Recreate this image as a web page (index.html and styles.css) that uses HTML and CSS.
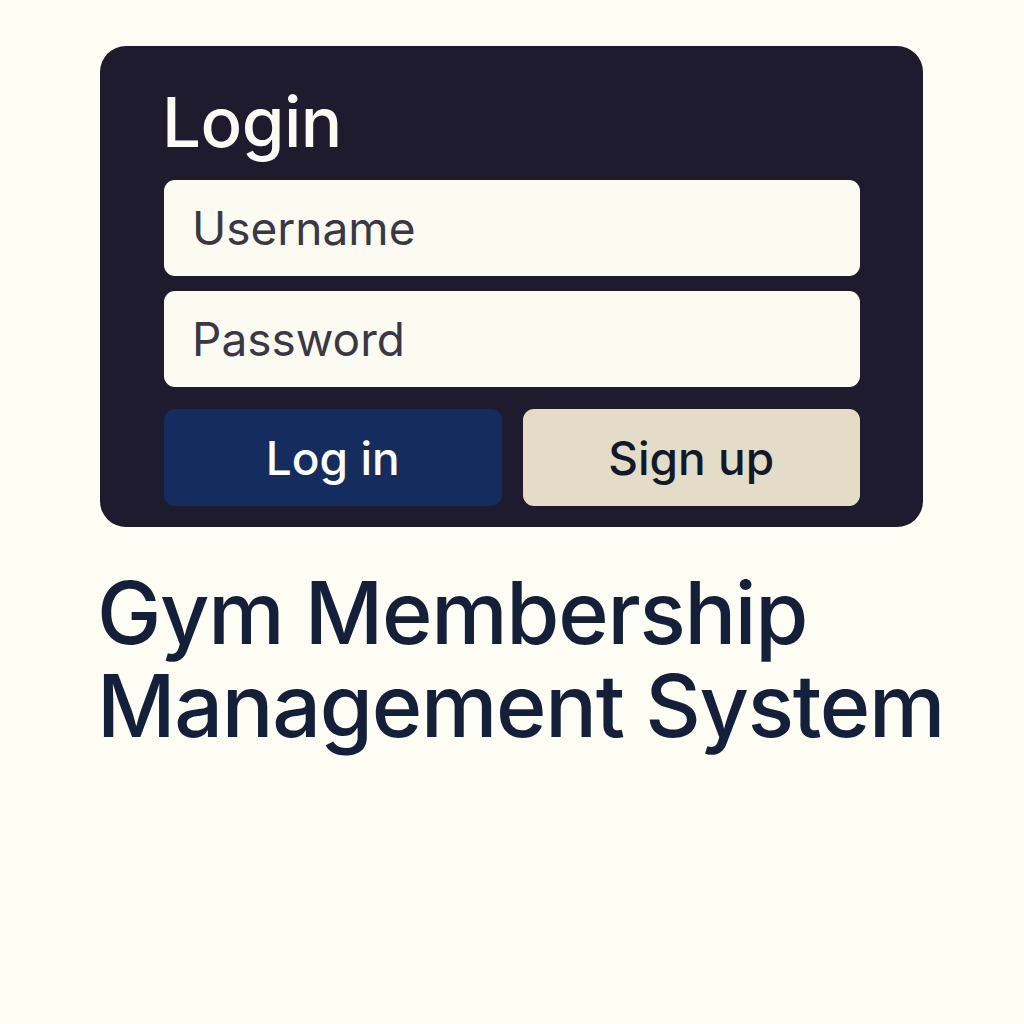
FILE: index.html
```html
<!DOCTYPE html>
<html>
<head>
<meta charset="utf-8">
<link rel="stylesheet" href="styles.css">
</head>
<body>
<main class="page">
  <section class="card">
    <h1 class="card-title">Login</h1>
    <div class="field">Username</div>
    <div class="field">Password</div>
    <div class="actions">
      <button class="btn btn-primary">Log in</button>
      <button class="btn btn-secondary">Sign up</button>
    </div>
  </section>
  <h2 class="headline">Gym Membership<br>Management System</h2>
</main>
</body>
</html>
```
FILE: styles.css
```css
* { box-sizing: border-box; }
html, body { margin: 0; padding: 0; }
body {
  background: #fdfdf4;
  font-family: Inter, "Noto Sans", sans-serif;
  width: 1024px;
  height: 1024px;
  overflow: hidden;
}
.page {
  padding: 46px 0 0 100px;
}
.card {
  width: 823px;
  height: 481px;
  background: #1f1b2e;
  border-radius: 26px;
  padding: 36px 63px 0 64px;
  display: flex;
  flex-direction: column;
}
.card-title {
  margin: 0 0 18px -2px;
  color: #fbfbf2;
  font-size: 69px;
  font-weight: 500;
  line-height: 80px;
  letter-spacing: -0.5px;
}
.field {
  height: 96px;
  background: #fbfbf2;
  border-radius: 11px;
  color: #3a3746;
  font-size: 46px;
  font-weight: 400;
  display: flex;
  align-items: center;
  padding-left: 28px;
  margin-bottom: 15px;
}
.actions {
  display: flex;
  gap: 21px;
  margin-top: 7px;
}
.btn {
  flex: 1;
  height: 97px;
  border: none;
  border-radius: 11px;
  font-family: inherit;
  font-size: 46px;
  font-weight: 500;
  padding: 0;
}
.btn-primary {
  background: #142c5e;
  color: #ffffff;
}
.btn-secondary {
  background: #e4dcc7;
  color: #111a2c;
}
.headline {
  margin: 40px 0 0 -3px;
  color: #14203a;
  font-size: 86px;
  font-weight: 500;
  line-height: 93px;
  letter-spacing: -1.3px;
}
```
